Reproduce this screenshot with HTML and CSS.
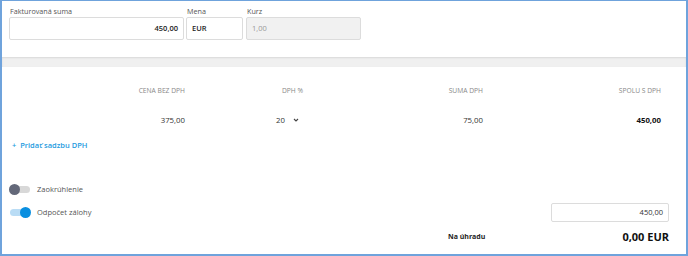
FILE: index.html
```html
<!doctype html>
<html lang="sk">
<head>
<meta charset="utf-8">
<title>Súhrn faktúry</title>
<link rel="stylesheet" href="styles.css">
</head>
<body>

<div class="frame">

	<div class="top">
		<div class="field f-suma">
			<label>Fakturovaná suma</label>
			<div class="inp right strong">450,00</div>
		</div>
		<div class="field f-mena">
			<label>Mena</label>
			<div class="inp strong">EUR</div>
		</div>
		<div class="field f-kurz">
			<label>Kurz</label>
			<div class="inp off">1,00</div>
		</div>
	</div>

	<div class="band"></div>

	<div class="vat">
		<div class="grid head">
			<div>CENA BEZ DPH</div>
			<div>DPH %</div>
			<div>SUMA DPH</div>
			<div>SPOLU S DPH</div>
		</div>
		<div class="grid vals">
			<div>375,00</div>
			<div class="sel">20 <svg width="6" height="4" viewBox="0 0 6 4"><path d="M1 1 L3 3 L5 1" fill="none" stroke="#444" stroke-width="1.1"/></svg></div>
			<div>75,00</div>
			<div class="b">450,00</div>
		</div>
		<a class="add">+&nbsp; Pridať sadzbu DPH</a>
	</div>

	<div class="opts">
		<div class="row">
			<span class="tog"><i></i></span>
			<span class="lbl">Zaokrúhlenie</span>
		</div>
		<div class="row">
			<span class="tog on"><i></i></span>
			<span class="lbl">Odpočet zálohy</span>
			<div class="inp right adv">450,00</div>
		</div>
		<div class="total">
			<span class="tl">Na úhradu</span>
			<span class="tv">0,00 EUR</span>
		</div>
	</div>

</div>

</body>
</html>
```

FILE: styles.css
```css
body {margin:0;padding:0;background:#fff;}

.frame {
	box-sizing:border-box;
	width:688px; height:256px;
	border:2px solid #6fa3dc;
	border-top-width:1px;
	font-family:"Open Sans", "Noto Sans", sans-serif;
	font-size:7.5px;
	color:#333;
	overflow:hidden;
}

/* top inputs */

.top {
	display:flex;
	gap:2px;
	padding:4px 0 0 7px;
	height:52px;
}

.field label {
	display:block;
	height:12px; line-height:12px;
	padding-left:1px;
	color:#555;
	font-size:7.2px;
}

.inp {
	box-sizing:border-box;
	height:23px; line-height:21px;
	padding:0 5px;
	border:1px solid #dcdcdc;
	border-radius:2px;
	background:#fff;
}
.inp.right {text-align:right;}
.inp.strong {font-weight:600;color:#222;}
.inp.off {background:#f1f1f1;color:#999;}

.f-suma {width:175px;}
.f-mena {width:57px;}
.f-kurz {width:115px;margin-left:1px;}

.band {
	height:10px;
	background:#f0f0f0;
	box-shadow:inset 0 1px 2px rgba(0,0,0,0.1);
}

/* dph table */

.vat {padding-top:19px;}

.grid {
	display:grid;
	grid-template-columns:183px 118px 180px 178px;
	text-align:right;
}
.head {font-size:6.7px;color:#888;height:10px;line-height:10px;}
.vals {margin-top:18px;height:12px;line-height:12px;font-size:7.8px;}
.vals .b {font-weight:700;color:#111;}
.sel {padding-right:4px;}
.sel svg {margin-left:6px;vertical-align:1px;}

.add {
	display:block;
	margin:13px 0 0 10px;
	color:#1e9be0;
	font-weight:600;
	line-height:12px;
}

/* options */

.opts {padding:32px 0 0 8px;}

.row {
	display:flex;
	align-items:center;
	height:12px;
	margin-bottom:11px;
}

.tog {
	position:relative;
	display:inline-block;
	width:20px; height:7px;
	border-radius:4px;
	background:#d8d8d8;
}
.tog i {
	position:absolute;
	left:-1px; top:-2px;
	width:11px; height:11px;
	border-radius:50%;
	background:#636879;
}
.tog.on {background:#b9dcf5;}
.tog.on i {left:auto;right:-1px;background:#0a8fe0;}

.lbl {margin-left:7px;color:#555;}

.adv {
	margin-left:auto;
	margin-right:17px;
	width:118px; height:19px; line-height:17px;
}

.total {
	display:flex;
	align-items:center;
	margin-top:8px;
	height:14px;
}
.tl {margin-left:438px;font-weight:700;font-size:7px;color:#222;}
.tv {margin-left:auto;margin-right:17px;font-size:11px;font-weight:700;color:#111;}
```
